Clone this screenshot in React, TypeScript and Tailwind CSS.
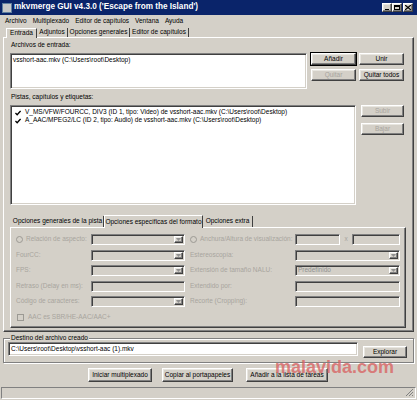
import type { ReactNode } from "react";

const raised =
  "border border-t-white border-l-white border-r-[#404040] border-b-[#404040] shadow-[inset_-1px_-1px_#808080,inset_1px_1px_#e8e6e0]";
const sunken =
  "border border-t-[#808080] border-l-[#808080] border-r-white border-b-white shadow-[inset_1px_1px_#404040,inset_-1px_-1px_#d4d0c8]";

const Btn = ({
  children,
  w,
  h = "h-[12px]",
  disabled,
  bold,
}: {
  children: ReactNode;
  w: string;
  h?: string;
  disabled?: boolean;
  bold?: boolean;
}) => (
  <div
    className={`${raised} ${w} ${h} flex items-center justify-center shrink-0 whitespace-nowrap ${
      disabled ? "text-[#a8a59e]" : "text-black"
    } ${bold ? "outline outline-1 outline-black" : ""}`}
  >
    {children}
  </div>
);

const Field = ({ w, children }: { w: string; children?: ReactNode }) => (
  <div className={`${sunken} ${w} h-[11px] bg-[#d4d0c8] flex items-center px-[2px] text-[#909090] shrink-0`}>
    {children}
  </div>
);

const Combo = ({ w, value }: { w: string; value?: string }) => (
  <div
    className={`${sunken} ${w} h-[11px] bg-[#d4d0c8] flex items-center justify-between pl-[2px] pr-[1px] text-[#909090] shrink-0`}
  >
    <span>{value}</span>
    <div className={`${raised} w-[9px] h-[7px] flex items-center justify-center`}>
      <svg width="5" height="3" viewBox="0 0 5 3">
        <path d="M0 0h5L2.5 3z" fill="#909090" />
      </svg>
    </div>
  </div>
);

const Radio = () => (
  <span className="inline-block w-[7px] h-[7px] rounded-full border border-[#9c9a94] bg-[#d4d0c8] mr-[3px] shrink-0" />
);

const Row = ({
  left,
  leftCtl,
  right,
  rightCtl,
  leftRadio,
  rightRadio,
}: {
  left: string;
  leftCtl: ReactNode;
  right: string;
  rightCtl: ReactNode;
  leftRadio?: boolean;
  rightRadio?: boolean;
}) => (
  <div className="flex items-center h-[11px] text-[#a8a59e]">
    <div className="w-[75px] flex items-center shrink-0">
      {leftRadio && <Radio />}
      <span className="whitespace-nowrap">{left}</span>
    </div>
    {leftCtl}
    <div className="w-[110px] pl-[5px] flex items-center shrink-0">
      {rightRadio && <Radio />}
      <span className="whitespace-nowrap">{right}</span>
    </div>
    {rightCtl}
  </div>
);

const Check = () => (
  <span className="inline-flex w-[8px] h-[7px] items-center justify-center mr-[3px] shrink-0">
    <svg width="6" height="6" viewBox="0 0 7 7">
      <path d="M0.5 3.5l2 2 4-4.5" stroke="#000" strokeWidth="1.6" fill="none" />
    </svg>
  </span>
);

export default function App() {
  return (
    <div
      className="w-[417px] h-[400px] bg-[#d4d0c8] flex flex-col overflow-hidden relative text-[6.5px] leading-none text-black"
      style={{ fontFamily: "'Liberation Sans', Arial, sans-serif" }}
    >
      {/* title bar */}
      <div className="h-[15px] bg-[#0a246a] flex items-center px-[2px] shrink-0">
        <div className="w-[10px] h-[10px] bg-[#c8c8c8] border border-[#6080a0] mr-[2px]" />
        <span className="text-white font-bold text-[8.2px] whitespace-nowrap">
          mkvmerge GUI v4.3.0 ('Escape from the Island')
        </span>
        <div className="ml-auto flex mr-[2px]">
          {["min", "max", "close"].map((k) => (
            <div
              key={k}
              className={`${raised} w-[10px] h-[9px] bg-[#d4d0c8] flex items-center justify-center ${
                k === "close" ? "ml-[1px]" : ""
              }`}
            >
              {k === "min" && <div className="w-[4px] h-[1px] bg-black mt-[4px]" />}
              {k === "max" && <div className="w-[6px] h-[5px] border border-black border-t-2" />}
              {k === "close" && (
                <svg width="6" height="5" viewBox="0 0 6 5">
                  <path d="M0 0l6 5M6 0L0 5" stroke="#000" strokeWidth="1.2" />
                </svg>
              )}
            </div>
          ))}
        </div>
      </div>

      {/* menu */}
      <div className="h-[12px] flex items-center gap-[6px] px-[5px] shrink-0 whitespace-nowrap">
        <span>Archivo</span>
        <span>Multiplexado</span>
        <span>Editor de capítulos</span>
        <span>Ventana</span>
        <span>Ayuda</span>
      </div>

      {/* tabs */}
      <div className="h-[10px] flex items-end pl-[6px] shrink-0 whitespace-nowrap">
        <div className="h-[10px] w-[31px] flex items-center justify-center border border-b-0 border-t-white border-l-white border-r-[#404040] bg-[#d4d0c8] relative top-[1px] z-10">
          Entrada
        </div>
        <div className="h-[9px] w-[31px] flex items-center justify-center border-r border-r-[#404040]">Adjuntos</div>
        <div className="h-[9px] w-[62px] flex items-center justify-center border-r border-r-[#404040]">
          Opciones generales
        </div>
        <div className="h-[9px] w-[59px] flex items-center justify-center border-r border-r-[#404040]">
          Editor de capítulos
        </div>
      </div>

      {/* main panel */}
      <div className="mx-[3px] h-[295px] border border-t-white border-l-white border-r-[#404040] border-b-[#404040] shadow-[inset_-1px_-1px_#808080] pl-[6px] flex flex-col shrink-0">
        <div className="h-[15px] flex items-center pl-[1px]">Archivos de entrada:</div>
        <div className="flex">
          <div className={`${sunken} bg-white w-[297px] h-[36px] px-[2px] pt-[3px] whitespace-nowrap`}>
            vsshort-aac.mkv (C:\Users\root\Desktop)
          </div>
          <div className="flex flex-col gap-[4px] ml-[4px]">
            <div className="flex gap-[3px]">
              <Btn w="w-[45px]" bold>
                Añadir
              </Btn>
              <Btn w="w-[45px]">Unir</Btn>
            </div>
            <div className="flex gap-[3px]">
              <Btn w="w-[45px]" disabled>
                Quitar
              </Btn>
              <Btn w="w-[45px]">Quitar todos</Btn>
            </div>
          </div>
        </div>

        <div className="h-[16px] flex items-center pl-[1px]">Pistas, capítulos y etiquetas:</div>
        <div className="flex">
          <div className={`${sunken} bg-white w-[346px] h-[100px] px-[3px] pt-[3px] flex flex-col gap-[1px]`}>
            <div className="flex items-center whitespace-nowrap h-[7px]">
              <Check />
              V_MS/VFW/FOURCC, DIV3 (ID 1, tipo: Video) de vsshort-aac.mkv (C:\Users\root\Desktop)
            </div>
            <div className="flex items-center whitespace-nowrap h-[7px]">
              <Check />
              A_AAC/MPEG2/LC (ID 2, tipo: Audio) de vsshort-aac.mkv (C:\Users\root\Desktop)
            </div>
          </div>
          <div className="flex flex-col gap-[6px] ml-[5px]">
            <Btn w="w-[43px]" disabled>
              Subir
            </Btn>
            <Btn w="w-[43px]" disabled>
              Bajar
            </Btn>
          </div>
        </div>

        {/* inner tabs */}
        <div className="h-[13px] flex items-end mt-[9px] pl-[2px] whitespace-nowrap">
          <div className="h-[11px] w-[92px] flex items-center justify-center border-r border-r-[#404040]">
            Opciones generales de la pista
          </div>
          <div className="h-[13px] w-[99px] flex items-center justify-center border border-b-0 border-t-white border-l-white border-r-[#404040] bg-[#d4d0c8] relative top-[1px] z-10">
            Opciones específicas del formato
          </div>
          <div className="h-[11px] w-[50px] flex items-center justify-center border-r border-r-[#404040]">
            Opciones extra
          </div>
        </div>
        <div className="w-[396px] h-[101px] border border-t-white border-l-white border-r-[#404040] border-b-[#404040] shadow-[inset_-1px_-1px_#808080] pl-[5px] pt-[6px] flex flex-col gap-[4.5px]">
          <Row
            leftRadio
            left="Relación de aspecto:"
            leftCtl={<Combo w="w-[94px]" />}
            rightRadio
            right="Anchura/Altura de visualización:"
            rightCtl={
              <div className="flex items-center">
                <Field w="w-[45px]" />
                <span className="w-[12px] text-center text-[#a8a59e]">x</span>
                <Field w="w-[48px]" />
              </div>
            }
          />
          <Row
            left="FourCC:"
            leftCtl={<Combo w="w-[94px]" />}
            right="Estereoscopía:"
            rightCtl={<Combo w="w-[105px]" />}
          />
          <Row
            left="FPS:"
            leftCtl={<Combo w="w-[94px]" />}
            right="Extensión de tamaño NALU:"
            rightCtl={<Combo w="w-[105px]" value="Predefinido" />}
          />
          <Row
            left="Retraso (Delay en ms):"
            leftCtl={<Field w="w-[94px]" />}
            right="Extendido por:"
            rightCtl={<Field w="w-[105px]" />}
          />
          <Row
            left="Código de caracteres:"
            leftCtl={<Combo w="w-[94px]" />}
            right="Recorte (Cropping):"
            rightCtl={<Field w="w-[105px]" />}
          />
          <div className="flex items-center h-[11px] text-[#a8a59e] ml-[1px] whitespace-nowrap">
            <span className="inline-block w-[7px] h-[7px] border border-[#9c9a94] bg-[#d4d0c8] mr-[4px]" />
            AAC es SBR/HE-AAC/AAC+
          </div>
        </div>
      </div>

      {/* destination group */}
      <div className="mx-[3px] mt-[6px] h-[25px] border border-[#808080] shadow-[1px_1px_white,inset_1px_1px_white] relative pl-[4px] pt-[3px] flex shrink-0">
        <span className="absolute left-[6px] top-[-4px] bg-[#d4d0c8] px-[1px] whitespace-nowrap">
          Destino del archivo creado
        </span>
        <div className={`${sunken} bg-white w-[350px] h-[14px] flex items-center px-[2px] whitespace-nowrap`}>
          C:\Users\root\Desktop\vsshort-aac (1).mkv
        </div>
        <div className="pt-[4px] ml-[5px]">
          <Btn w="w-[44px]">Explorar</Btn>
        </div>
      </div>

      {/* bottom buttons */}
      <div className="flex mt-[5px] h-[14px] shrink-0 pl-[88px]">
        <Btn w="w-[64px]" h="h-[14px]">
          Iniciar multiplexado
        </Btn>
        <div className="ml-[10px]">
          <Btn w="w-[71px]" h="h-[14px]">
            Copiar al portapapeles
          </Btn>
        </div>
        <div className="ml-[13px]">
          <Btn w="w-[82px]" h="h-[14px]">
            Añadir a la lista de tareas
          </Btn>
        </div>
      </div>

      {/* status bar */}
      <div className="mt-auto mb-[1px] mx-[1px] h-[12px] border border-t-[#808080] border-l-[#808080] border-r-white border-b-white relative">
        <svg className="absolute right-[1px] bottom-[1px]" width="9" height="9" viewBox="0 0 9 9">
          <path d="M8 1L1 8M8 4L4 8M8 7L7 8" stroke="#808080" strokeWidth="1" />
        </svg>
      </div>

      {/* watermark */}
      <span
        className="absolute left-[275px] top-[358px] text-[18px] font-bold text-[#d86464]/80 pointer-events-none whitespace-nowrap"
        style={{ fontFamily: "'Liberation Sans', Arial, sans-serif" }}
      >
        malavida.com
      </span>
    </div>
  );
}
